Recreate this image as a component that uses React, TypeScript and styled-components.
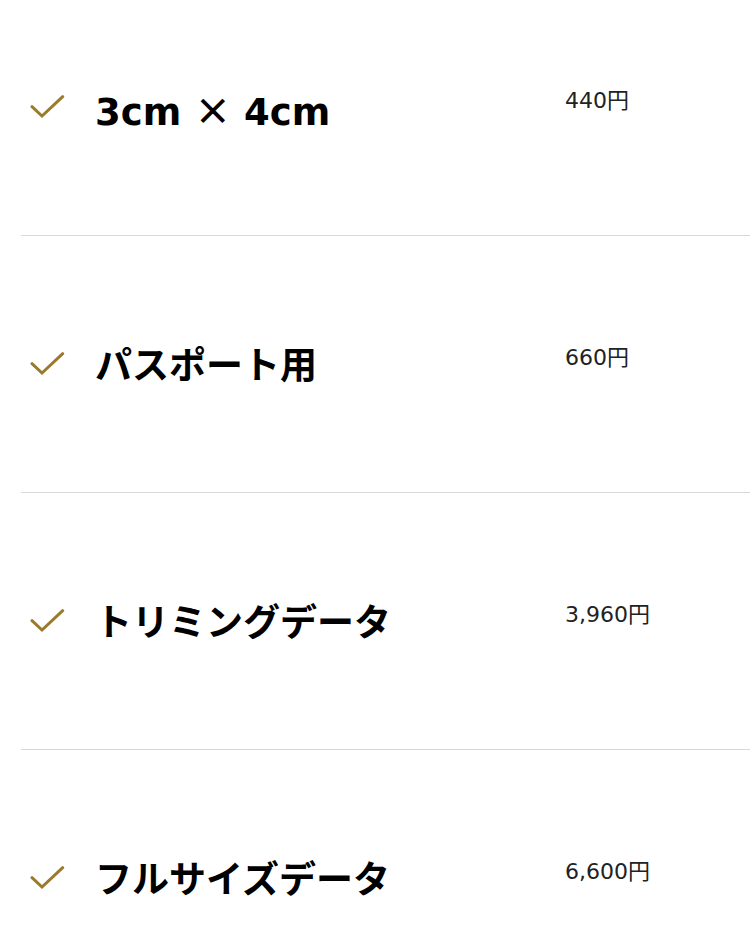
import React from "react";
import styled, { createGlobalStyle } from "styled-components";

const Global = createGlobalStyle`
  html, body { margin: 0; padding: 0; background: #fff; }
  body { font-family: "DejaVu Sans", "Noto Sans CJK JP", sans-serif; overflow: hidden; }
`;

const List = styled.ul`
  list-style: none;
  margin: 0 0 0 21px;
  padding: 0;
`;

const Row = styled.li`
  box-sizing: border-box;
  height: 257px;
  padding-top: 105px;
  border-bottom: 1px solid #d8d8d8;
  display: grid;
  grid-template-columns: 74px 470px 1fr;
  align-items: start;
  &:first-child {
    height: 236px;
    padding-top: 84px;
  }
`;

const CheckCell = styled.div`
  height: 46px;
  display: flex;
  align-items: center;
  padding-left: 9px;
`;

const Title = styled.div`
  font-family: "DejaVu Sans", "Noto Sans CJK JP", sans-serif;
  font-size: 37px;
  line-height: 1.4;
  font-weight: 700;
  color: #000;
  white-space: nowrap;
`;

const Times = styled.span`
  font-family: "Noto Sans CJK JP", sans-serif;
`;

const Price = styled.div`
  font-family: "DejaVu Sans", "Noto Sans CJK JP", sans-serif;
  font-size: 22px;
  line-height: 1.5;
  font-weight: 400;
  color: #222;
  white-space: nowrap;
`;

const Check = () => (
  <svg width="36" height="24" viewBox="0 0 36 24" fill="none">
    <polyline
      points="2,11.7 12,21 32.7,1.7"
      stroke="#9a7b2c"
      strokeWidth="3"
      strokeLinecap="round"
      strokeLinejoin="miter"
    />
  </svg>
);

const items: { key: string; title: React.ReactNode; price: string }[] = [
  {
    key: "a",
    title: (
      <>
        3cm <Times>×</Times> 4cm
      </>
    ),
    price: "440円",
  },
  { key: "b", title: "パスポート用", price: "660円" },
  { key: "c", title: "トリミングデータ", price: "3,960円" },
  { key: "d", title: "フルサイズデータ", price: "6,600円" },
];

export default function App() {
  return (
    <>
      <Global />
      <List>
        {items.map((it) => (
          <Row key={it.key}>
            <CheckCell>
              <Check />
            </CheckCell>
            <Title>{it.title}</Title>
            <Price>{it.price}</Price>
          </Row>
        ))}
      </List>
    </>
  );
}
